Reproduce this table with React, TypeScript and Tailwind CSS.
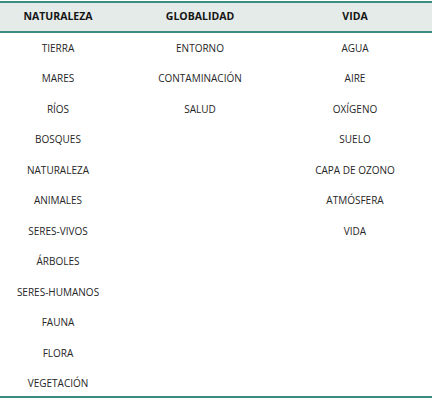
import React from "react";

const col1 = ["TIERRA","MARES","RÍOS","BOSQUES","NATURALEZA","ANIMALES","SERES-VIVOS","ÁRBOLES","SERES-HUMANOS","FAUNA","FLORA","VEGETACIÓN"];
const col2 = ["ENTORNO","CONTAMINACIÓN","SALUD"];
const col3 = ["AGUA","AIRE","OXÍGENO","SUELO","CAPA DE OZONO","ATMÓSFERA","VIDA"];

function Col({ items }: { items: string[] }) {
  return (
    <div className="flex flex-col">
      {items.map((t) => (
        <div key={t} className="h-[30.5px] flex items-center justify-center">
          {t}
        </div>
      ))}
    </div>
  );
}

export default function App() {
  return (
    <div className="w-[443px] h-[404px] bg-white pt-[1px]" style={{ fontFamily: '"Open Sans", sans-serif' }}>
      <div className="w-[432px] text-[10px] text-[#262626]">
        <div className="border-t-2 border-b-2 border-[#3a8d80] bg-[#e4ebe9] h-[32px] grid grid-cols-[116px_168px_142px] items-center font-bold text-[10.5px] text-[#151515]">
          <div className="text-center">NATURALEZA</div>
          <div className="text-center">GLOBALIDAD</div>
          <div className="text-center">VIDA</div>
        </div>
        <div className="h-[363px] overflow-hidden grid grid-cols-[116px_168px_142px] items-start border-b-2 border-[#3a8d80] box-content">
          <Col items={col1} />
          <Col items={col2} />
          <Col items={col3} />
        </div>
      </div>
    </div>
  );
}
